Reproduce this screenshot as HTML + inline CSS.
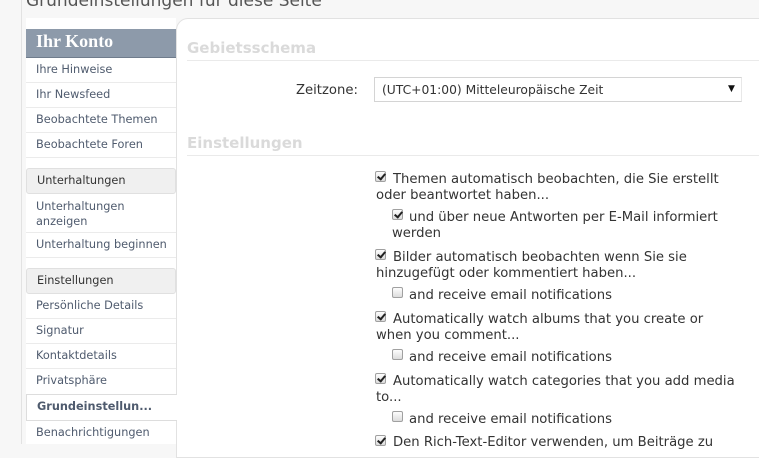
<!DOCTYPE html>
<html><head><meta charset="utf-8"><style>
*{margin:0;padding:0;box-sizing:border-box}
body{width:759px;height:444px;overflow:hidden;background:#f7f7f7;font-family:"DejaVu Sans","Liberation Sans",sans-serif;position:relative}
.a{position:absolute;white-space:nowrap}
.side{color:#4f5b6e;font-size:11.3px}
.t{font-size:13.2px;color:#333;margin-top:2px}
.cb{position:absolute;width:11px;height:11px;border:1px solid #a0a0a0;border-radius:2px;background:linear-gradient(#fdfdfd,#dcdcdc)}
.cb.c::after{content:"";position:absolute;left:3px;top:0px;width:3px;height:6px;border:solid #222;border-width:0 2px 2px 0;transform:rotate(40deg)}
.sep{position:absolute;left:26px;width:150px;height:1px;background:#ebebeb}
.h{font-weight:bold;font-size:15px;color:#dadada}
</style></head><body>
<div class="a" style="left:21px;top:0;width:1px;height:444px;background:#e2e2e2"></div>
<div class="a" style="left:26px;top:-9px;font-size:17px;color:#555">Grundeinstellungen für diese Seite</div>
<div class="a" style="left:26px;top:18px;width:150px;height:426px;background:#fff"></div>
<div class="a" style="left:176px;top:18px;width:600px;height:440px;background:#fff;border:1px solid #e2e2e2;border-radius:12px 0 0 0"></div>
<div class="a" style="left:26px;top:29px;width:150px;height:29px;background:#8d9aaa;border-bottom:1px solid #6f7c8c"></div>
<div class="a" style="left:36px;top:31px;font-family:'Liberation Serif',serif;font-weight:bold;font-size:18px;color:#fff">Ihr Konto</div>
<div class="a side" style="left:36px;top:63px">Ihre Hinweise</div>
<div class="sep" style="top:82px"></div>
<div class="a side" style="left:36px;top:88px">Ihr Newsfeed</div>
<div class="sep" style="top:107px"></div>
<div class="a side" style="left:36px;top:113px">Beobachtete Themen</div>
<div class="sep" style="top:132px"></div>
<div class="a side" style="left:36px;top:138px">Beobachtete Foren</div>
<div class="sep" style="top:157px"></div>
<div class="a" style="left:26px;top:168px;width:150px;height:26px;background:#f0f0f0;border:1px solid #e0e0e0;border-radius:3px"></div>
<div class="a side" style="left:37px;top:174px;color:#333">Unterhaltungen</div>
<div class="a side" style="left:36px;top:199px;line-height:15px">Unterhaltungen<br>anzeigen</div>
<div class="sep" style="top:232px"></div>
<div class="a side" style="left:36px;top:238px">Unterhaltung beginnen</div>
<div class="sep" style="top:257px"></div>
<div class="a" style="left:26px;top:268px;width:150px;height:26px;background:#f0f0f0;border:1px solid #e0e0e0;border-radius:3px"></div>
<div class="a side" style="left:37px;top:274px;color:#333">Einstellungen</div>
<div class="a side" style="left:36px;top:299px">Persönliche Details</div>
<div class="sep" style="top:318px"></div>
<div class="a side" style="left:36px;top:324px">Signatur</div>
<div class="sep" style="top:343px"></div>
<div class="a side" style="left:36px;top:349px">Kontaktdetails</div>
<div class="sep" style="top:368px"></div>
<div class="a side" style="left:36px;top:374px">Privatsphäre</div>
<div class="a" style="left:26px;top:394px;width:151px;height:27px;background:#fff;border:1px solid #ddd;border-right:none"></div>
<div class="a side" style="left:37px;top:400px;font-weight:bold;color:#4f5b6e">Grundeinstellun...</div>
<div class="a side" style="left:36px;top:426px">Benachrichtigungen</div>

<div class="a h" style="left:187px;top:39px">Gebietsschema</div>
<div class="a" style="left:187px;top:60px;width:572px;height:1px;background:#eaeaea"></div>
<div class="a t" style="left:296px;top:81px">Zeitzone:</div>
<div class="a" style="left:374px;top:77px;width:368px;height:25px;border:1px solid #d4d4d4;border-right-color:#e8e8e8;background:#fff"></div>
<div class="a t" style="left:382px;top:81px;font-size:12.3px">(UTC+01:00) Mitteleuropäische Zeit</div>
<div class="a" style="left:728px;top:84px;font-size:9px;color:#111">▼</div>
<div class="a h" style="left:187px;top:134px">Einstellungen</div>
<div class="a" style="left:187px;top:155px;width:572px;height:1px;background:#eaeaea"></div>

<div class="cb c" style="left:375px;top:171px"></div>
<div class="a t" style="left:393px;top:170px">Themen automatisch beobachten, die Sie erstellt</div>
<div class="a t" style="left:376px;top:186px">oder beantwortet haben...</div>
<div class="cb c" style="left:392px;top:209px"></div>
<div class="a t" style="left:409px;top:208px">und über neue Antworten per E-Mail informiert</div>
<div class="a t" style="left:392px;top:224px">werden</div>
<div class="cb c" style="left:375px;top:249px"></div>
<div class="a t" style="left:393px;top:248px">Bilder automatisch beobachten wenn Sie sie</div>
<div class="a t" style="left:376px;top:264px">hinzugefügt oder kommentiert haben...</div>
<div class="cb" style="left:392px;top:287px"></div>
<div class="a t" style="left:409px;top:286px">and receive email notifications</div>
<div class="cb c" style="left:375px;top:311px"></div>
<div class="a t" style="left:393px;top:310px">Automatically watch albums that you create or</div>
<div class="a t" style="left:376px;top:326px">when you comment...</div>
<div class="cb" style="left:392px;top:349px"></div>
<div class="a t" style="left:409px;top:348px">and receive email notifications</div>
<div class="cb c" style="left:375px;top:373px"></div>
<div class="a t" style="left:393px;top:372px">Automatically watch categories that you add media</div>
<div class="a t" style="left:376px;top:388px">to...</div>
<div class="cb" style="left:392px;top:411px"></div>
<div class="a t" style="left:409px;top:410px">and receive email notifications</div>
<div class="cb c" style="left:375px;top:435px"></div>
<div class="a t" style="left:393px;top:433px">Den Rich-Text-Editor verwenden, um Beiträge zu</div>
</body></html>
